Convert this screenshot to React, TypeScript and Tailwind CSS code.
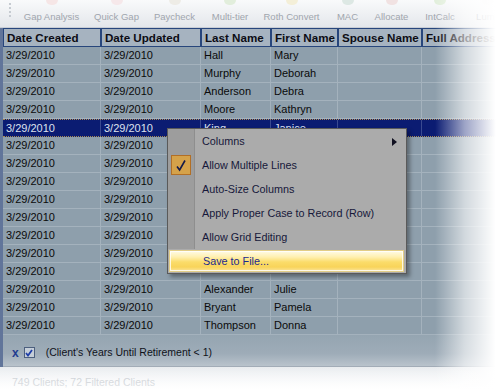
import React from "react";

const colW = [98, 100, 70, 67, 84, 140];

type Row = { a: string; b: string; last: string; first: string; sel?: boolean };

const rows: Row[] = [
  { a: "3/29/2010", b: "3/29/2010", last: "Hall", first: "Mary" },
  { a: "3/29/2010", b: "3/29/2010", last: "Murphy", first: "Deborah" },
  { a: "3/29/2010", b: "3/29/2010", last: "Anderson", first: "Debra" },
  { a: "3/29/2010", b: "3/29/2010", last: "Moore", first: "Kathryn" },
  { a: "3/29/2010", b: "3/29/2010", last: "King", first: "Janice", sel: true },
  { a: "3/29/2010", b: "3/29/2010", last: "", first: "" },
  { a: "3/29/2010", b: "3/29/2010", last: "", first: "" },
  { a: "3/29/2010", b: "3/29/2010", last: "", first: "" },
  { a: "3/29/2010", b: "3/29/2010", last: "", first: "" },
  { a: "3/29/2010", b: "3/29/2010", last: "", first: "" },
  { a: "3/29/2010", b: "3/29/2010", last: "", first: "" },
  { a: "3/29/2010", b: "3/29/2010", last: "", first: "" },
  { a: "3/29/2010", b: "3/29/2010", last: "", first: "" },
  { a: "3/29/2010", b: "3/29/2010", last: "Alexander", first: "Julie" },
  { a: "3/29/2010", b: "3/29/2010", last: "Bryant", first: "Pamela" },
  { a: "3/29/2010", b: "3/29/2010", last: "Thompson", first: "Donna" },
];

const tools: { label: string; w: number; icon: string }[] = [
  { label: "Gap Analysis", w: 65, icon: "bg-[#f6e6e6]" },
  { label: "Quick Gap", w: 65, icon: "bg-[#f6e8ea]" },
  { label: "Paycheck", w: 51, icon: "bg-[#eeece6]" },
  { label: "Multi-tier", w: 60, icon: "bg-[#e2eedc]" },
  { label: "Roth Convert", w: 63, icon: "bg-[#f4efd8]" },
  { label: "MAC", w: 49, icon: "bg-[#dde8e4]" },
  { label: "Allocate", w: 39, icon: "bg-[#f1e2e2]" },
  { label: "IntCalc", w: 58, icon: "bg-[#e2efdc]" },
  { label: "Lump", w: 38, icon: "bg-[#f2f2f2]" },
];

const headers = ["Date Created", "Date Updated", "Last Name", "First Name", "Spouse Name", "Full Address"];

function MenuItem({ label, check, arrow }: { label: string; check?: boolean; arrow?: boolean }) {
  return (
    <div className="flex h-[24px]">
      <div className="w-[27px] shrink-0 bg-[#9d9d9d] border-r border-[#8e8e8e] flex items-center justify-center">
        {check && (
          <div className="w-[20px] h-[20px] bg-[#d5a24a] border border-[#b26f26] flex items-center justify-center">
            <svg width="12" height="13" viewBox="0 0 12 13">
              <path d="M2 7.5 L4.6 11 L10 1.5" stroke="#141a4a" strokeWidth="1.6" fill="none" />
            </svg>
          </div>
        )}
      </div>
      <div className="flex-1 flex items-center pl-[7px] text-[10.8px] text-[#16183a] relative">
        {label}
        {arrow && (
          <svg className="absolute right-[9px] top-[9px]" width="5" height="8" viewBox="0 0 5 8">
            <path d="M0 0 L5 4 L0 8 Z" fill="#101020" />
          </svg>
        )}
      </div>
    </div>
  );
}

export default function App() {
  return (
    <div className="relative w-[501px] h-[389px] overflow-hidden bg-white font-['Liberation_Sans',Arial,sans-serif]">
      {/* toolbar */}
      <div className="relative h-[28px] bg-[linear-gradient(to_bottom,#f9fafb,#e4e7eb)] border-b border-[#c9ced5] flex">
        <div className="w-[19px] shrink-0 flex flex-col items-center gap-[2px] pt-[3px]">
          <div className="w-[2px] h-[2px] bg-[#c6cbd1]" />
          <div className="w-[2px] h-[2px] bg-[#c6cbd1]" />
          <div className="w-[2px] h-[2px] bg-[#c6cbd1]" />
          <div className="w-[2px] h-[2px] bg-[#c6cbd1]" />
        </div>
        {tools.map((t) => (
          <div key={t.label} style={{ width: t.w }} className="shrink-0 flex flex-col items-center">
            <div className={`w-[12px] h-[5px] rounded-b-full ${t.icon}`} />
            <div className="mt-[6px] text-[9.5px] leading-[11px] text-[#a0a5ad] whitespace-nowrap">{t.label}</div>
          </div>
        ))}
      </div>

      {/* grid */}
      <div className="flex">
        <div className="w-[3px] shrink-0 bg-[#61759a]" />
        <div className="flex-1 min-w-0">
          {/* header */}
          <div className="flex h-[19px] bg-[#a6b3c0]">
            {headers.map((h, i) => (
              <div
                key={h}
                style={{ width: colW[i] }}
                className="shrink-0 border border-[#27467c] pl-[3px] flex items-center text-[11.6px] font-bold text-[#0c0c14] whitespace-nowrap overflow-hidden"
              >
                {h}
              </div>
            ))}
          </div>
          {/* rows */}
          {rows.map((r, idx) => {
            const vals = [r.a, r.b, r.last, r.first, "", ""];
            return (
              <div
                key={idx}
                className={
                  r.sel
                    ? "flex h-[18px] bg-[#0b1c72] border-y border-dotted border-[#a88a52]"
                    : "flex h-[18px] bg-[#8e9fac] border-b border-[#a4b2bd]"
                }
              >
                {vals.map((v, i) => (
                  <div
                    key={i}
                    style={{ width: colW[i] }}
                    className={
                      r.sel
                        ? "shrink-0 pl-[3px] flex items-center text-[11px] text-[#dde2ee] border-r border-[#3a4a90] whitespace-nowrap overflow-hidden"
                        : "shrink-0 pl-[3px] flex items-center text-[11px] text-[#0a0a0a] border-r border-[#a4b2bd] whitespace-nowrap overflow-hidden"
                    }
                  >
                    {v}
                  </div>
                ))}
              </div>
            );
          })}
          {/* filter panel */}
          <div className="h-[32px] pt-[4px] bg-[linear-gradient(to_bottom,#95a5b1,#9eacb8_60%,#b9c3cc)] border-b border-[#a2acb7] flex items-center">
            <span className="ml-[9px] text-[12px] font-bold text-[#1f3c90] leading-none">x</span>
            <div className="ml-[5px] w-[11px] h-[11px] border border-[#4c5f7e] bg-[#c5ced8] flex items-center justify-center">
              <svg width="8" height="8" viewBox="0 0 8 8">
                <path d="M1 4 L3 6.5 L7 1" stroke="#1e3ea8" strokeWidth="1.8" fill="none" />
              </svg>
            </div>
            <span className="ml-[11px] text-[10.5px] text-[#10121a] whitespace-nowrap">(Client's Years Until Retirement &lt; 1)</span>
          </div>
        </div>
      </div>
      {/* status */}
      <div className="h-[22px] bg-[linear-gradient(to_bottom,#e9ecef,#ffffff)] pl-[12px] pt-[10px] text-[10.5px] leading-[11px] text-[#c3c8ce] whitespace-nowrap">
        749 Clients; 72 Filtered Clients
      </div>

      {/* fades */}
      <div className="absolute right-0 top-0 h-full w-[66px] pointer-events-none bg-[linear-gradient(to_right,rgba(255,255,255,0),rgba(255,255,255,0.6)_45%,#ffffff_92%)]" />
      <div className="absolute left-0 bottom-0 w-full h-[22px] pointer-events-none bg-[linear-gradient(to_bottom,rgba(255,255,255,0),rgba(255,255,255,0.5))]" />

      {/* context menu */}
      <div className="absolute left-[167px] top-[128px] w-[240px] border border-[#5a5a5a] bg-[#ababab] shadow-[3px_3px_4px_rgba(0,0,0,0.35)]">
        <MenuItem label="Columns" arrow />
        <MenuItem label="Allow Multiple Lines" check />
        <MenuItem label="Auto-Size Columns" />
        <MenuItem label="Apply Proper Case to Record (Row)" />
        <MenuItem label="Allow Grid Editing" />
        <div className="h-[24px] p-[1px] pr-[2px]">
          <div className="h-full border border-[#e2cd86] bg-[linear-gradient(to_bottom,#fffbe6,#fff0b0_30%,#fbdc6a_55%,#f8d45a_80%,#fbe49a)] shadow-[inset_0_0_0_1px_rgba(255,255,255,0.8)] flex items-center pl-[33px] text-[10.8px] text-[#1b2a8e]">
            Save to File...
          </div>
        </div>
      </div>
    </div>
  );
}
